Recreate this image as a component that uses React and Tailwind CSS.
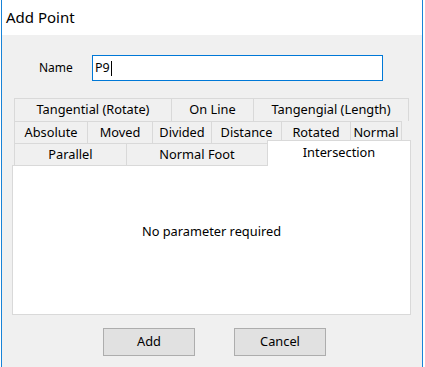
import React from 'react';

const font = { fontFamily: '"Noto Sans", "Open Sans", sans-serif' };

const rowOne = [
  { label: 'Tangential (Rotate)', w: 'w-[157px]' },
  { label: 'On Line', w: 'w-[82px]' },
  { label: 'Tangengial (Length)', w: 'w-[156px]' },
];

const rowTwo = [
  { label: 'Absolute', w: 'w-[73px]' },
  { label: 'Moved', w: 'w-[65px]' },
  { label: 'Divided', w: 'w-[59px]' },
  { label: 'Distance', w: 'w-[70px]' },
  { label: 'Rotated', w: 'w-[69px]' },
  { label: 'Normal', w: 'w-[52px]' },
];

const Tab = ({ label, w, last }) => (
  <div
    className={`${w} h-full flex items-center justify-center border-t border-l border-[#d9d9d9] bg-[#f0f0f0] text-[12.8px] text-black whitespace-nowrap ${
      last ? 'border-r' : ''
    }`}
  >
    {label}
  </div>
);

const App = () => {
  return (
    <div className="w-[425px] h-[367px] bg-white pl-[1px] overflow-hidden" style={font}>
      <div className="w-[422px] h-full border-x border-[#1883d7] flex flex-col">
        {/* Title bar */}
        <div className="h-[35px] bg-white flex items-center pl-[4px] text-[15px] text-black">Add Point</div>

        <div className="flex-1 bg-[#f0f0f0] flex flex-col">
          {/* Name row */}
          <div className="flex items-center mt-[20px] h-[26px]">
            <span className="ml-[37px] w-[53px] text-[12px] text-black">Name</span>
            <div className="w-[291px] h-[26px] border border-[#0078d7] bg-white flex items-center pl-[2px] text-[12.5px] text-black">
              P9<span className="w-px h-[15px] bg-black ml-px" />
            </div>
          </div>

          {/* Tab widget */}
          <div className="mt-[17px] ml-[10px] flex flex-col">
            <div className="ml-[2px] flex h-[23px]">
              {rowOne.map((t, i) => (
                <Tab key={t.label} {...t} last={i === rowOne.length - 1} />
              ))}
            </div>
            <div className="ml-[2px] flex h-[22px]">
              {rowTwo.map((t, i) => (
                <Tab key={t.label} {...t} last={i === rowTwo.length - 1} />
              ))}
            </div>
            <div className="ml-[2px] flex items-end h-[22px]">
              <Tab label="Parallel" w="w-[112px]" />
              <Tab label="Normal Foot" w="w-[141px]" />
              <div className="relative z-10 w-[144px] h-[26px] -mb-px border-t border-x border-[#d9d9d9] bg-white flex items-start justify-center pt-[2px] text-[12.8px] text-black">
                Intersection
              </div>
            </div>
            <div className="w-[399px] h-[150px] border border-[#d9d9d9] bg-white flex justify-center pt-[56px] text-[12.8px] text-black">
              No parameter required
            </div>
          </div>

          {/* Buttons */}
          <div className="flex mt-[13px] ml-[101px] gap-[39px]">
            <button className="w-[92px] h-[28px] border border-[#adadad] bg-[#e1e1e1] text-[12.8px] text-black">Add</button>
            <button className="w-[92px] h-[28px] border border-[#adadad] bg-[#e1e1e1] text-[12.8px] text-black">Cancel</button>
          </div>
        </div>
      </div>
    </div>
  );
};

export default App;
